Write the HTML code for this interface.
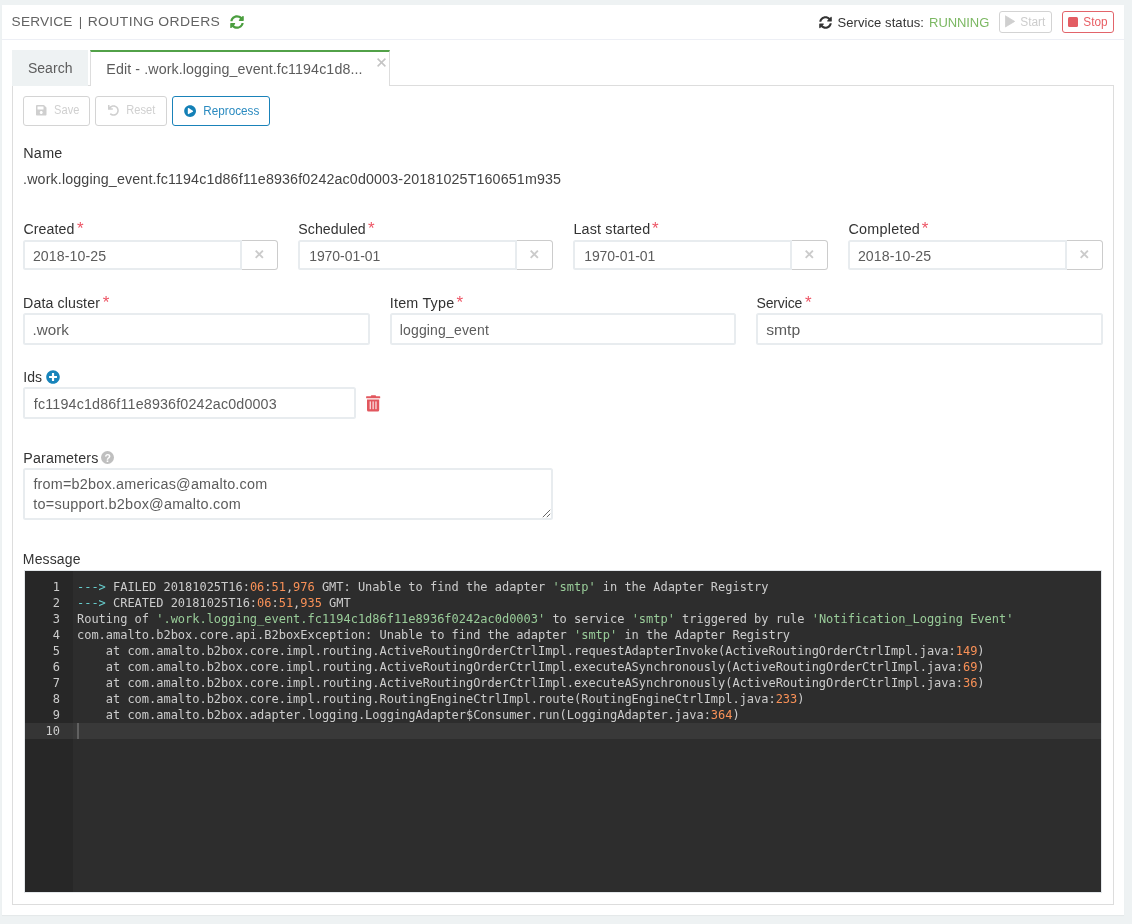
<!DOCTYPE html>
<html lang="en">
<head>
<meta charset="utf-8">
<title>Service | Routing Orders</title>
<style>
*{box-sizing:border-box;margin:0;padding:0}
html,body{width:1132px;height:924px;overflow:hidden}
body{background:#eef2f3;font-family:"Liberation Sans",sans-serif;color:#444;font-size:14px;position:relative}
.abs{position:absolute}
#root{position:absolute;left:0;top:0;width:1132px;height:924px;will-change:transform}
#card{position:absolute;left:2px;top:5px;width:1122px;height:910px;background:#fff;box-shadow:0 1px 1px rgba(0,0,0,0.035)}
#hdrline{position:absolute;left:2px;top:39px;width:1122px;height:1px;background:#edeff5}
.t{position:absolute;white-space:pre;line-height:1}
.req{position:absolute;color:#ed5565;font-size:17px;line-height:1;font-family:"Liberation Sans",sans-serif}
.inp{position:absolute;height:30px;border:2px solid #e8ecef;border-radius:2.5px;background:#fff}
.xbtn{position:absolute;width:37px;height:30px;border:1px solid #ccc;border-left:none;border-radius:0 3.500px 3.500px 0;background:#fff}
.btn{position:absolute;height:30px;top:96px;border:1px solid #d4d4d4;border-radius:3px;background:#fff}
#tab1{position:absolute;left:12px;top:50px;width:76px;height:36px;background:#eef2f3}
#tab2{position:absolute;left:90px;top:50px;width:300px;height:36px;background:#fff;border:1px solid #ddd;border-top:2px solid #52a148;border-bottom:none}
#panel{position:absolute;left:12px;top:85px;width:1102px;height:820px;border:1px solid #ddd}
#ed{position:absolute;left:24px;top:570px;width:1078px;height:323px;background:#2d2d2d;border:1px solid #e3e7ea;font-family:"DejaVu Sans Mono","Liberation Mono",monospace;font-size:12px;color:#cccccc;overflow:hidden}
#gut{position:absolute;left:0;top:0;width:48px;height:100%;background:#272727}
#actg{position:absolute;left:0;top:152px;width:48px;height:16px;background:#353535}
#actl{position:absolute;left:48px;top:152px;right:0;height:16px;background:#393939}
#cur{position:absolute;left:52px;top:152px;width:2px;height:16px;background:#616161}
.ln{position:absolute;left:0;width:35px;text-align:right;line-height:16px;height:16px;color:#cccccc}
.cl{position:absolute;left:52px;line-height:16px;height:16px;white-space:pre;letter-spacing:-0.022px}
.g{color:#99cc99}.o{color:#f99157}.c{color:#66cccc}
</style>
</head>
<body>
<div id="root">
<div id="card"></div>
<div id="hdrline"></div>
<svg class="abs" style="left:230px;top:15px" width="14" height="14" viewBox="0 0 512 512"><path fill="#4b9e3f" d="M370.7 133.3C339.5 104 298.9 88 255.8 88c-77.5.1-144.3 53.2-162.800 126.900-1.300 5.400-6.100 9.100-11.700 9.100H24.100c-7.500 0-13.200-6.800-11.800-14.200C33.900 94.900 134.800 8 256 8c66.400 0 126.800 26.100 171.300 68.700L463 41C478.100 25.900 504 36.600 504 57.900V192c0 13.300-10.700 24-24 24H345.900c-21.400 0-32.100-25.900-17-41l41.800-41.700zM32 296h134.100c21.400 0 32.100 25.900 17 41l-41.800 41.800c31.300 29.300 71.800 45.300 114.900 45.300 77.400-.1 144.300-53.100 162.800-126.800 1.300-5.400 6.100-9.100 11.700-9.100h57.300c7.500 0 13.200 6.800 11.800 14.200C478.100 417.100 377.200 504 256 504c-66.400 0-126.800-26.100-171.300-68.700L49 471c-15.100 15.100-41 4.400-41-16.900V320c0-13.300 10.700-24 24-24z"/></svg>
<svg class="abs" style="left:819px;top:16px" width="13" height="13" viewBox="0 0 512 512"><path fill="#333" d="M370.7 133.3C339.5 104 298.9 88 255.8 88c-77.5.1-144.3 53.2-162.800 126.900-1.300 5.400-6.100 9.100-11.700 9.100H24.100c-7.500 0-13.200-6.800-11.800-14.200C33.900 94.900 134.800 8 256 8c66.400 0 126.800 26.100 171.300 68.700L463 41C478.100 25.900 504 36.600 504 57.900V192c0 13.300-10.700 24-24 24H345.900c-21.400 0-32.100-25.900-17-41l41.800-41.700zM32 296h134.100c21.400 0 32.100 25.900 17 41l-41.800 41.800c31.300 29.300 71.800 45.300 114.900 45.300 77.400-.1 144.300-53.100 162.800-126.800 1.300-5.400 6.100-9.100 11.700-9.100h57.300c7.500 0 13.200 6.800 11.800 14.200C478.100 417.100 377.200 504 256 504c-66.400 0-126.800-26.100-171.300-68.700L49 471c-15.100 15.100-41 4.400-41-16.900V320c0-13.300 10.700-24 24-24z"/></svg>
<div class="abs" style="left:999px;top:11px;width:53px;height:22px;border:1px solid #d3d3d3;border-radius:3px;background:#fff"></div>
<svg class="abs" style="left:1005px;top:15px" width="11" height="13" viewBox="0 0 11 13"><path fill="#cfcfcf" stroke="#cfcfcf" stroke-width="0.800" stroke-linejoin="round" d="M0.400 0.800 L9.700 6.400 L0.400 12z"/></svg>
<div class="abs" style="left:1062px;top:11px;width:52px;height:22px;border:1px solid #e2646a;border-radius:3px;background:#fff"></div>
<div class="abs" style="left:1068px;top:16.500px;width:10px;height:10px;border-radius:1.500px;background:#e35d63"></div>
<div id="panel"></div>
<div id="tab1"></div>
<div id="tab2"></div>
<svg class="abs" style="left:377px;top:58.200px" width="9" height="9" viewBox="0 0 9 9"><path d="M0.600 0.600 L8.400 8.400 M8.400 0.600 L0.600 8.400" stroke="#c4c4c4" stroke-width="1.500" fill="none"/></svg>
<div class="btn" style="left:23px;width:67px"></div>
<div class="btn" style="left:95px;width:72px"></div>
<div class="btn" style="left:172px;width:98px;border-color:#1a82b9"></div>
<svg class="abs" style="left:36.300px;top:105.300px" width="10.500" height="10.500" viewBox="0 32 448 448" preserveAspectRatio="none"><path fill="#cfcfcf" d="M433.941 129.941l-83.882-83.882A48 48 0 0 0 316.118 32H48C21.490 32 0 53.490 0 80v352c0 26.510 21.490 48 48 48h352c26.510 0 48-21.490 48-48V163.882a48 48 0 0 0-14.059-33.941zM224 416c-35.346 0-64-28.654-64-64 0-35.346 28.654-64 64-64s64 28.654 64 64c0 35.346-28.654 64-64 64zm96-304.520V212c0 6.627-5.373 12-12 12H76c-6.627 0-12-5.373-12-12V108c0-6.627 5.373-12 12-12h228.520c3.183 0 6.235 1.264 8.485 3.515l3.480 3.480A11.996 11.996 0 0 1 320 111.480z"/></svg>
<svg class="abs" style="left:108px;top:105px" width="11" height="11" viewBox="0 0 512 512"><path fill="#cfcfcf" d="M212.333 224.333H12c-6.627 0-12-5.373-12-12V12C0 5.373 5.373 0 12 0h48c6.627 0 12 5.373 12 12v78.112C117.773 39.279 184.260 7.470 258.175 8.007c136.906.994 246.448 111.623 246.157 248.532C504.041 393.258 393.120 504 256.333 504c-64.089 0-122.496-24.313-166.510-64.215-5.099-4.622-5.334-12.554-.467-17.420l33.967-33.967c4.474-4.474 11.662-4.717 16.401-.525C170.760 415.336 211.580 432 256.333 432c97.268 0 176-78.716 176-176 0-97.267-78.716-176-176-176-58.496 0-110.280 28.476-142.274 72.333h98.274c6.627 0 12 5.373 12 12v48c0 6.627-5.373 12-12 12z"/></svg>
<svg class="abs" style="left:184.400px;top:104.500px" width="12.200" height="12.200" viewBox="0 0 512 512"><path fill="#1480b6" d="M256 8C119 8 8 119 8 256s111 248 248 248 248-111 248-248S393 8 256 8zm115.700 272l-176 101c-15.800 8.800-35.700-2.500-35.700-21V152c0-18.400 19.800-29.800 35.700-21l176 107c16.400 9.200 16.400 32.900 0 42z"/></svg>
<div class="xbtn" style="left:241px;top:240px"></div>
<div class="inp" style="left:23px;top:240px;width:219px;border-radius:2.500px 0 0 2.500px"></div>
<svg class="abs" style="left:255.3px;top:250.300px" width="8.600" height="8.600" viewBox="0 0 8.600 8.600"><path d="M0.700 0.700 L7.900 7.900 M7.900 0.700 L0.700 7.900" stroke="#cbcbcb" stroke-width="1.900" fill="none"/></svg>
<div class="xbtn" style="left:516px;top:240px"></div>
<div class="inp" style="left:298px;top:240px;width:219px;border-radius:2.500px 0 0 2.500px"></div>
<svg class="abs" style="left:530.3px;top:250.300px" width="8.600" height="8.600" viewBox="0 0 8.600 8.600"><path d="M0.700 0.700 L7.900 7.900 M7.900 0.700 L0.700 7.900" stroke="#cbcbcb" stroke-width="1.900" fill="none"/></svg>
<div class="xbtn" style="left:791px;top:240px"></div>
<div class="inp" style="left:573px;top:240px;width:219px;border-radius:2.500px 0 0 2.500px"></div>
<svg class="abs" style="left:805.3px;top:250.300px" width="8.600" height="8.600" viewBox="0 0 8.600 8.600"><path d="M0.700 0.700 L7.900 7.900 M7.900 0.700 L0.700 7.900" stroke="#cbcbcb" stroke-width="1.900" fill="none"/></svg>
<div class="xbtn" style="left:1066px;top:240px"></div>
<div class="inp" style="left:848px;top:240px;width:219px;border-radius:2.500px 0 0 2.500px"></div>
<svg class="abs" style="left:1080.3px;top:250.300px" width="8.600" height="8.600" viewBox="0 0 8.600 8.600"><path d="M0.700 0.700 L7.900 7.900 M7.900 0.700 L0.700 7.900" stroke="#cbcbcb" stroke-width="1.900" fill="none"/></svg>
<div class="inp" style="left:23px;top:313px;width:347px;height:32px"></div>
<div class="inp" style="left:390px;top:313px;width:346px;height:32px"></div>
<div class="inp" style="left:756px;top:313px;width:347px;height:32px"></div>
<div class="inp" style="left:23px;top:387px;width:333px;height:32px"></div>
<svg class="abs" style="left:45.830px;top:369.730px" width="14.040" height="14.040" viewBox="0 0 512 512"><path fill="#1784bb" d="M256 8C119 8 8 119 8 256s111 248 248 248 248-111 248-248S393 8 256 8zm144 276c0 6.600-5.400 12-12 12h-92v92c0 6.600-5.400 12-12 12h-56c-6.600 0-12-5.400-12-12v-92h-92c-6.600 0-12-5.400-12-12v-56c0-6.600 5.400-12 12-12h92v-92c0-6.600 5.400-12 12-12h56c6.600 0 12 5.400 12 12v92h92c6.600 0 12 5.400 12 12v56z"/></svg>
<svg class="abs" style="left:366px;top:394.500px" width="14.500" height="17" viewBox="0 0 14.500 17"><g fill="#e2575e"><rect x="4.800" y="0.350" width="5.300" height="2" rx="0.900"/><rect x="0.100" y="1.250" width="14.100" height="2.050" rx="0.500"/><path d="M1 4.600 H13.200 V14.900 Q13.200 16.400 11.700 16.400 H2.500 Q1 16.400 1 14.900 Z"/></g><g fill="#fbe3e4"><rect x="3.650" y="6.400" width="1.250" height="7.800"/><rect x="6.500" y="6.400" width="1.250" height="7.800"/><rect x="9.350" y="6.400" width="1.250" height="7.800"/></g></svg>
<div class="inp" style="left:23px;top:468px;width:530px;height:52px"></div>
<svg class="abs" style="left:542px;top:509px" width="9" height="9" viewBox="0 0 9 9"><path d="M0.800 8.200 L8.200 0.800 M4.800 8.200 L8.200 4.800" stroke="#555" stroke-width="0.900" fill="none"/></svg>
<div class="abs" style="left:100.800px;top:451.050px;width:13.300px;height:13.300px;border-radius:50%;background:#bfbfbf"></div>
<div class="t" style="left:104.450px;top:453px;font-size:10.500px;font-weight:bold;color:#fff">?</div>
<div class="req" style="left:76.9px;top:219.6px">*</div>
<div class="req" style="left:368.0px;top:219.6px">*</div>
<div class="req" style="left:651.9px;top:219.6px">*</div>
<div class="req" style="left:921.8px;top:219.6px">*</div>
<div class="req" style="left:102.8px;top:293.6px">*</div>
<div class="req" style="left:456.5px;top:293.6px">*</div>
<div class="req" style="left:805.1px;top:293.6px">*</div>
<div class="t" style="left:11px;top:15.36px;font-size:13.4px;letter-spacing:0.178px;transform:translateX(0.62px) scaleX(1.0198);transform-origin:0 0;color:#636363">SERVICE</div>
<div class="t" style="left:78.73px;top:15.36px;font-size:13.4px;letter-spacing:0.000px;color:#636363">|</div>
<div class="t" style="left:87px;top:15.36px;font-size:13.4px;letter-spacing:0.377px;transform:translateX(0.67px) scaleX(1.0385);transform-origin:0 0;color:#636363">ROUTING</div>
<div class="t" style="left:158px;top:15.36px;font-size:13.4px;letter-spacing:0.392px;transform:translateX(0.31px) scaleX(1.0391);transform-origin:0 0;color:#636363">ORDERS</div>
<div class="t" style="left:837.38px;top:15.90px;font-size:13px;letter-spacing:0.092px;color:#333">Service status:</div>
<div class="t" style="left:929.07px;top:15.90px;font-size:13px;letter-spacing:-0.072px;color:#7cb863">RUNNING</div>
<div class="t" style="left:1020px;top:15.84px;font-size:12px;transform:translateX(0.22px) scaleX(0.9933);transform-origin:0 0;color:#cdcdcd">Start</div>
<div class="t" style="left:1083px;top:15.84px;font-size:12px;transform:translateX(0.33px) scaleX(0.9819);transform-origin:0 0;color:#e85d63">Stop</div>
<div class="t" style="left:27.94px;top:61.15px;font-size:14px;letter-spacing:0.029px;color:#5c5c5c">Search</div>
<div class="t" style="left:106px;top:62.15px;font-size:14px;letter-spacing:0.097px;transform:translateX(0.35px) scaleX(1.0173);transform-origin:0 0;color:#5c5c5c">Edit - .work.logging_event.fc1194c1d8...</div>
<div class="t" style="left:54px;top:104.42px;font-size:12.5px;transform:translateX(0.10px) scaleX(0.8859);transform-origin:0 0;color:#d0d0d0">Save</div>
<div class="t" style="left:126px;top:104.42px;font-size:12.5px;transform:translateX(0.16px) scaleX(0.8901);transform-origin:0 0;color:#d0d0d0">Reset</div>
<div class="t" style="left:203px;top:104.59px;font-size:12.3px;transform:translateX(0.36px) scaleX(0.9518);transform-origin:0 0;color:#2b8bc0">Reprocess</div>
<div class="t" style="left:23px;top:145.85px;font-size:14px;letter-spacing:0.271px;transform:translateX(0.23px) scaleX(1.0249);transform-origin:0 0;color:#333">Name</div>
<div class="t" style="left:23px;top:171.55px;font-size:14px;letter-spacing:0.134px;transform:translateX(0.09px) scaleX(1.0183);transform-origin:0 0;color:#444">.work.logging_event.fc1194c1d86f11e8936f0242ac0d0003-20181025T160651m935</div>
<div class="t" style="left:23px;top:222.15px;font-size:14px;letter-spacing:0.059px;transform:translateX(0.55px) scaleX(1.0114);transform-origin:0 0;color:#333">Created</div>
<div class="t" style="left:298px;top:222.15px;font-size:14px;letter-spacing:0.069px;transform:translateX(0.25px) scaleX(1.0112);transform-origin:0 0;color:#333">Scheduled</div>
<div class="t" style="left:573px;top:222.15px;font-size:14px;letter-spacing:0.155px;transform:translateX(0.46px) scaleX(1.0244);transform-origin:0 0;color:#333">Last started</div>
<div class="t" style="left:848px;top:222.15px;font-size:14px;letter-spacing:0.227px;transform:translateX(0.50px) scaleX(1.0262);transform-origin:0 0;color:#333">Completed</div>
<div class="t" style="left:32px;top:248.95px;font-size:14px;letter-spacing:0.086px;transform:translateX(0.89px) scaleX(1.0106);transform-origin:0 0;color:#5c5c5c">2018-10-25</div>
<div class="t" style="left:309.17px;top:248.95px;font-size:14px;letter-spacing:-0.054px;color:#5c5c5c">1970-01-01</div>
<div class="t" style="left:584.17px;top:248.95px;font-size:14px;letter-spacing:-0.054px;color:#5c5c5c">1970-01-01</div>
<div class="t" style="left:857px;top:248.95px;font-size:14px;letter-spacing:0.086px;transform:translateX(0.89px) scaleX(1.0106);transform-origin:0 0;color:#5c5c5c">2018-10-25</div>
<div class="t" style="left:23px;top:295.95px;font-size:14px;letter-spacing:0.096px;transform:translateX(0.02px) scaleX(1.0148);transform-origin:0 0;color:#333">Data cluster</div>
<div class="t" style="left:389px;top:295.95px;font-size:14px;letter-spacing:0.192px;transform:translateX(0.81px) scaleX(1.0253);transform-origin:0 0;color:#333">Item Type</div>
<div class="t" style="left:756.45px;top:295.95px;font-size:14px;letter-spacing:-0.124px;color:#333">Service</div>
<div class="t" style="left:32px;top:323.35px;font-size:14px;transform:translateX(0.49px) scaleX(1.0868);transform-origin:0 0;color:#5c5c5c">.work</div>
<div class="t" style="left:399.73px;top:323.35px;font-size:14px;letter-spacing:0.161px;color:#5c5c5c">logging_event</div>
<div class="t" style="left:766px;top:323.35px;font-size:14px;transform:translateX(0.14px) scaleX(1.1225);transform-origin:0 0;color:#5c5c5c">smtp</div>
<div class="t" style="left:23.14px;top:369.55px;font-size:14px;letter-spacing:0.144px;color:#333">Ids</div>
<div class="t" style="left:33px;top:396.55px;font-size:14px;letter-spacing:0.158px;transform:translateX(0.82px) scaleX(1.0207);transform-origin:0 0;color:#5c5c5c">fc1194c1d86f11e8936f0242ac0d0003</div>
<div class="t" style="left:23px;top:450.85px;font-size:14px;letter-spacing:0.164px;transform:translateX(0.25px) scaleX(1.0173);transform-origin:0 0;color:#333">Parameters</div>
<div class="t" style="left:33px;top:476.55px;font-size:14px;letter-spacing:0.207px;transform:translateX(0.38px) scaleX(1.0272);transform-origin:0 0;color:#5c5c5c">from=b2box.americas@amalto.com</div>
<div class="t" style="left:33px;top:496.65px;font-size:14px;letter-spacing:0.235px;transform:translateX(0.30px) scaleX(1.0308);transform-origin:0 0;color:#5c5c5c">to=support.b2box@amalto.com</div>
<div class="t" style="left:22.86px;top:552.15px;font-size:14px;letter-spacing:0.125px;color:#333">Message</div>
<div id="ed"><div id="gut"></div><div id="actg"></div><div id="actl"></div><div id="cur"></div>
<div class="ln" style="top:8px">1</div><div class="cl" style="top:8px"><span class="c">---&gt;</span> FAILED 20181025T16:<span class="o">06</span>:<span class="o">51</span>,<span class="o">976</span> GMT: Unable to find the adapter <span class="g">'smtp'</span> in the Adapter Registry</div>
<div class="ln" style="top:24px">2</div><div class="cl" style="top:24px"><span class="c">---&gt;</span> CREATED 20181025T16:<span class="o">06</span>:<span class="o">51</span>,<span class="o">935</span> GMT</div>
<div class="ln" style="top:40px">3</div><div class="cl" style="top:40px">Routing of <span class="g">'.work.logging_event.fc1194c1d86f11e8936f0242ac0d0003'</span> to service <span class="g">'smtp'</span> triggered by rule <span class="g">'Notification_Logging Event'</span></div>
<div class="ln" style="top:56px">4</div><div class="cl" style="top:56px">com.amalto.b2box.core.api.B2boxException: Unable to find the adapter <span class="g">'smtp'</span> in the Adapter Registry</div>
<div class="ln" style="top:72px">5</div><div class="cl" style="top:72px">    at com.amalto.b2box.core.impl.routing.ActiveRoutingOrderCtrlImpl.requestAdapterInvoke(ActiveRoutingOrderCtrlImpl.java:<span class="o">149</span>)</div>
<div class="ln" style="top:88px">6</div><div class="cl" style="top:88px">    at com.amalto.b2box.core.impl.routing.ActiveRoutingOrderCtrlImpl.executeASynchronously(ActiveRoutingOrderCtrlImpl.java:<span class="o">69</span>)</div>
<div class="ln" style="top:104px">7</div><div class="cl" style="top:104px">    at com.amalto.b2box.core.impl.routing.ActiveRoutingOrderCtrlImpl.executeASynchronously(ActiveRoutingOrderCtrlImpl.java:<span class="o">36</span>)</div>
<div class="ln" style="top:120px">8</div><div class="cl" style="top:120px">    at com.amalto.b2box.core.impl.routing.RoutingEngineCtrlImpl.route(RoutingEngineCtrlImpl.java:<span class="o">233</span>)</div>
<div class="ln" style="top:136px">9</div><div class="cl" style="top:136px">    at com.amalto.b2box.adapter.logging.LoggingAdapter$Consumer.run(LoggingAdapter.java:<span class="o">364</span>)</div>
<div class="ln" style="top:152px">10</div><div class="cl" style="top:152px"></div>
</div>
</div>
</body>
</html>
